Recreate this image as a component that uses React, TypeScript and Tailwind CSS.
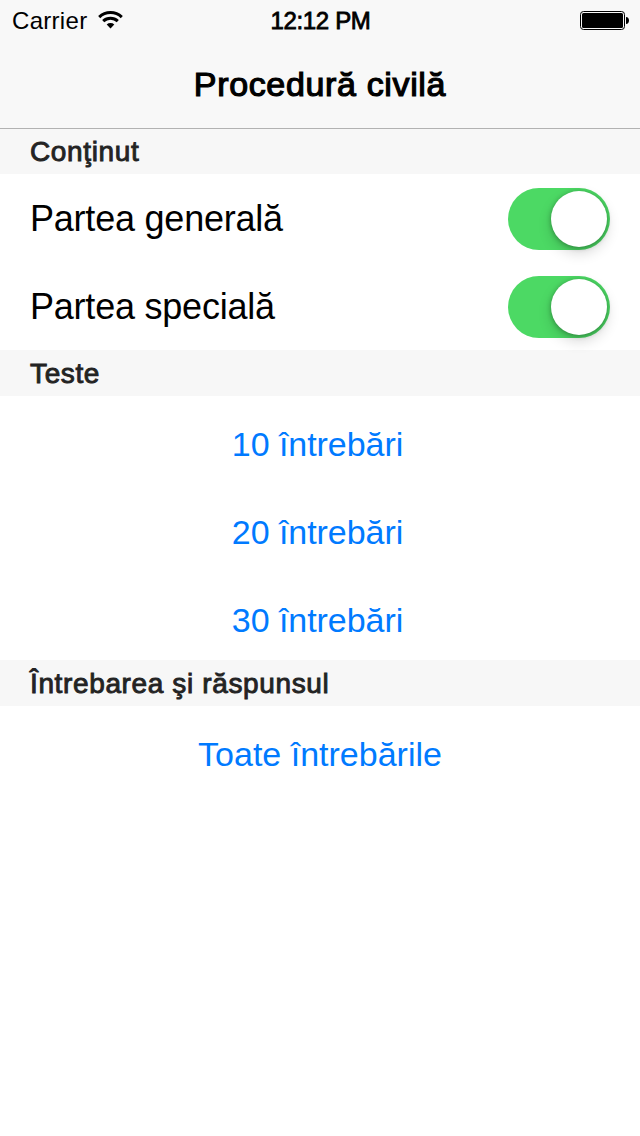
import type { ReactNode } from 'react';

const StatusBar = () => (
  <div className="grid h-[42px] grid-cols-3 items-center pr-[11px] pl-3 text-[24px]">
    <div className="flex items-center gap-[11px]">
      <span className="tracking-[0.3px]">Carrier</span>
      <svg className="mb-0.5" width="25" height="18" viewBox="0 0 25 18" fill="none" stroke="#000" strokeWidth="3">
        <path d="M1.2 6.1a16.4 16.4 0 0 1 22.6 0" />
        <path d="M5.2 10.2a10.6 10.6 0 0 1 14.6 0" />
        <path d="M12.5 17.5l-3.8-3.9a5.6 5.6 0 0 1 7.6 0z" fill="#000" stroke="none" />
      </svg>
    </div>
    <span className="text-center tracking-[-0.35px] [-webkit-text-stroke:0.8px_black]">12:12 PM</span>
    <svg className="mb-0.5 justify-self-end" width="49" height="19" viewBox="0 0 49 19">
      <rect x="0.5" y="0.5" width="44" height="18" rx="3" fill="none" stroke="#000" />
      <rect x="2" y="2" width="41" height="15" rx="1.5" />
      <path d="M46 6c4 0 4 7 0 7z" />
    </svg>
  </div>
);

const SectionHeader = ({ title }: { title: string }) => (
  <h2 className="flex h-[46px] items-center bg-[#f7f7f7] px-[30px] pt-px text-[28px] tracking-[0.63px] text-[#232323] [-webkit-text-stroke:0.9px_#232323]">
    {title}
  </h2>
);

const SwitchRow = ({ label }: { label: string }) => (
  <div className="flex h-[88px] items-center justify-between px-[30px] pt-0.5">
    <span className="text-[36px] tracking-[-0.22px]">{label}</span>
    <button role="switch" aria-checked="true" aria-label={label} className="flex h-[62px] w-[102px] justify-end rounded-full bg-[#4cd964] p-[3px]">
      <span className="size-14 rounded-full bg-white shadow-[0_6px_14px_rgba(0,0,0,0.16),0_1px_5px_rgba(0,0,0,0.3)]" />
    </button>
  </div>
);

const LinkRow = ({ children }: { children: ReactNode }) => (
  <button className="flex h-[88px] w-full items-center justify-center pt-2 text-[34px] text-[#007aff]">
    {children}
  </button>
);

export default function App() {
  return (
    <div className="h-[1136px] w-[640px] overflow-hidden bg-white font-['Liberation_Sans',sans-serif] text-black">
      {/* the hairline sits on top of the first section header */}
      <header className="relative -mb-px h-[129px] border-b border-[#b2b2b2] bg-[#f8f8f8]">
        <StatusBar />
        <h1 className="flex h-[84px] items-center justify-center text-[34px] tracking-[0.65px] [-webkit-text-stroke:1.2px_black]">
          Procedură civilă
        </h1>
      </header>
      <SectionHeader title="Conţinut" />
      <SwitchRow label="Partea generală" />
      <SwitchRow label="Partea specială" />
      <SectionHeader title="Teste" />
      <div className="pr-[5px] tracking-[-0.05px]">
        <LinkRow>10 întrebări</LinkRow>
        <LinkRow>20 întrebări</LinkRow>
        <LinkRow>30 întrebări</LinkRow>
      </div>
      <SectionHeader title="Întrebarea şi răspunsul" />
      <LinkRow>Toate întrebările</LinkRow>
    </div>
  );
}
